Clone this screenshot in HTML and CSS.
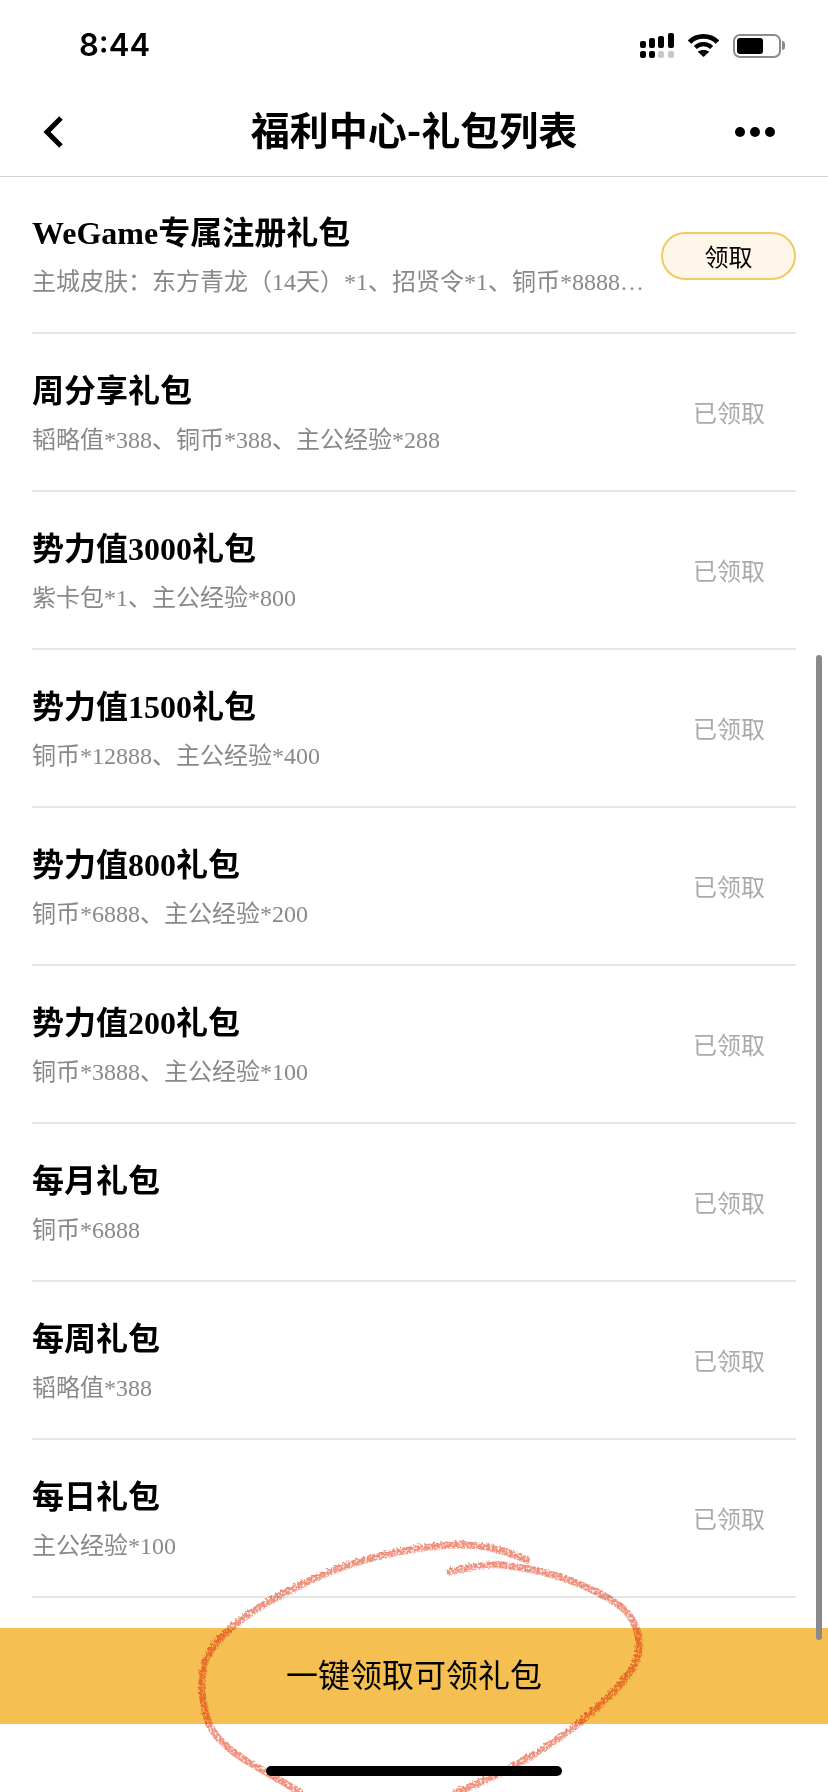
FILE: index.html
```html
<!DOCTYPE html>
<html lang="zh-CN">
<head>
    <meta charset="UTF-8">
    <meta name="viewport" content="width=device-width, initial-scale=1.0">
    <title>福利中心-礼包列表</title>
    <link rel="stylesheet" href="styles.css">
</head>
<body>
    <div class="phone">
        <div class="status-bar">
            <span class="time">8:44</span>
            <div class="status-icons">
                <svg class="signal" width="34" height="25" viewBox="0 0 34 25">
                    <rect x="0" y="8" width="6" height="7" rx="2" fill="#000"/>
                    <rect x="9" y="5" width="6" height="10" rx="2" fill="#000"/>
                    <rect x="18" y="3" width="6" height="12" rx="2" fill="#000"/>
                    <rect x="28" y="0" width="6" height="15" rx="2" fill="#000"/>
                    <rect x="0" y="18" width="6" height="7" rx="2" fill="#000"/>
                    <rect x="9" y="18" width="6" height="7" rx="2" fill="#000"/>
                    <rect x="18" y="18" width="6" height="7" rx="2" fill="#c8c8c8"/>
                    <rect x="28" y="18" width="6" height="7" rx="2" fill="#c8c8c8"/>
                </svg>
                <svg class="wifi" width="31" height="23" viewBox="0 0 32 24">
                    <path d="M1.5 8.5 C9 0.5 23 0.5 30.5 8.5" fill="none" stroke="#000" stroke-width="5"/>
                    <path d="M7.5 14 C12 9.5 20 9.5 24.5 14" fill="none" stroke="#000" stroke-width="4.5"/>
                    <path d="M16 24 L10 18.5 C13 16 19 16 22 18.5 Z" fill="#000"/>
                </svg>
                <div class="battery">
                    <div class="battery-body"><div class="battery-level"></div></div>
                    <div class="battery-cap"></div>
                </div>
            </div>
        </div>

        <div class="nav-bar">
            <svg class="back" width="24" height="36" viewBox="0 0 24 36">
                <path d="M21 4 L7 18 L21 32" fill="none" stroke="#000" stroke-width="5"/>
            </svg>
            <h1 class="nav-title">福利中心-礼包列表</h1>
            <div class="more"><span></span><span></span><span></span></div>
        </div>

        <div class="gift-list">
            <div class="gift-row">
                <div class="gift-info">
                    <div class="gift-name">WeGame专属注册礼包</div>
                    <div class="gift-desc">主城皮肤：东方青龙（14天）*1、招贤令*1、铜币*8888…</div>
                </div>
                <button class="claim-btn">领取</button>
            </div>
            <div class="gift-row">
                <div class="gift-info">
                    <div class="gift-name">周分享礼包</div>
                    <div class="gift-desc">韬略值*388、铜币*388、主公经验*288</div>
                </div>
                <span class="claimed">已领取</span>
            </div>
            <div class="gift-row">
                <div class="gift-info">
                    <div class="gift-name">势力值3000礼包</div>
                    <div class="gift-desc">紫卡包*1、主公经验*800</div>
                </div>
                <span class="claimed">已领取</span>
            </div>
            <div class="gift-row">
                <div class="gift-info">
                    <div class="gift-name">势力值1500礼包</div>
                    <div class="gift-desc">铜币*12888、主公经验*400</div>
                </div>
                <span class="claimed">已领取</span>
            </div>
            <div class="gift-row">
                <div class="gift-info">
                    <div class="gift-name">势力值800礼包</div>
                    <div class="gift-desc">铜币*6888、主公经验*200</div>
                </div>
                <span class="claimed">已领取</span>
            </div>
            <div class="gift-row">
                <div class="gift-info">
                    <div class="gift-name">势力值200礼包</div>
                    <div class="gift-desc">铜币*3888、主公经验*100</div>
                </div>
                <span class="claimed">已领取</span>
            </div>
            <div class="gift-row">
                <div class="gift-info">
                    <div class="gift-name">每月礼包</div>
                    <div class="gift-desc">铜币*6888</div>
                </div>
                <span class="claimed">已领取</span>
            </div>
            <div class="gift-row">
                <div class="gift-info">
                    <div class="gift-name">每周礼包</div>
                    <div class="gift-desc">韬略值*388</div>
                </div>
                <span class="claimed">已领取</span>
            </div>
            <div class="gift-row">
                <div class="gift-info">
                    <div class="gift-name">每日礼包</div>
                    <div class="gift-desc">主公经验*100</div>
                </div>
                <span class="claimed">已领取</span>
            </div>
        </div>

        <button class="claim-all">一键领取可领礼包</button>
        <div class="home-area"><div class="home-indicator"></div></div>

        <!-- scrollbar thumb and the hand drawn circle lie over the page -->
        <div class="scroll-thumb"></div>
        <svg class="scribble" width="828" height="1792" viewBox="0 0 828 1792">
            <defs>
                <filter id="crayon" filterUnits="userSpaceOnUse" x="150" y="1500" width="550" height="292">
                    <feTurbulence type="fractalNoise" baseFrequency="0.4" numOctaves="3" seed="7" result="noise"/>
                    <feDisplacementMap in="SourceGraphic" in2="noise" scale="5" result="rough"/>
                    <feColorMatrix in="noise" type="matrix" values="0 0 0 0 0  0 0 0 0 0  0 0 0 0 0  0 0 0 3 -0.6" result="grain"/>
                    <feComposite in="rough" in2="grain" operator="in" result="grainy"/>
                    <feGaussianBlur in="grainy" stdDeviation="0.5"/>
                </filter>
            </defs>
            <g class="scribble-lines" filter="url(#crayon)">
                <path d="M527 1560 Q507 1552 493.5 1548.5 Q480 1545 460 1545 Q440 1545 415 1549 Q390 1553 363.5 1560.5 Q337 1568 313.5 1579 Q290 1590 273.5 1599 Q257 1608 243.5 1618 Q230 1628 220 1639 Q210 1650 206 1660 Q202 1670 202 1685 Q202 1700 206 1715 Q210 1730 221.5 1741.5 Q233 1753 250 1763 Q267 1773 300 1792"/>
                <path d="M450 1572 Q487 1563 503.5 1565 Q520 1567 541.5 1572 Q563 1577 581.5 1585 Q600 1593 613.5 1601.5 Q627 1610 632.5 1620 Q638 1630 639 1640 Q640 1650 636.5 1660 Q633 1670 623 1681.5 Q613 1693 600 1705 Q587 1717 570 1730 Q553 1743 536.5 1753 Q520 1763 503.5 1771.5 Q487 1780 457 1792"/>
            </g>
        </svg>
    </div>
</body>
</html>
```

FILE: styles.css
```css
* {
    box-sizing: border-box;
}
body {
    margin: 0;
    background-color: #fff;
    color: #000;
    font-family: "Liberation Serif", "Noto Sans CJK SC", serif;
}
.phone {
    position: relative;
    width: 828px;
    height: 1792px;
    overflow: hidden;
    display: flex;
    flex-direction: column;
    background-color: #fff;
}

/* Status bar */
.status-bar {
    height: 88px;
    padding: 29px 43px 0 79px;
    display: flex;
    justify-content: space-between;
    align-items: flex-start;
}
.time {
    font-family: Inter, "Liberation Sans", sans-serif;
    font-size: 31px;
    font-weight: 600;
    line-height: 32px;
}
.status-icons {
    display: flex;
    align-items: center;
    gap: 14px;
    padding-top: 4px;
}
.battery {
    display: flex;
    align-items: center;
    gap: 1px;
}
.battery-body {
    width: 48px;
    height: 24px;
    padding: 2px;
    border: 2px solid #8c8c8c;
    border-radius: 7px;
}
.battery-level {
    width: 26px;
    height: 100%;
    background-color: #000;
    border-radius: 3px;
}
.battery-cap {
    width: 3px;
    height: 9px;
    background-color: #8c8c8c;
    border-radius: 0 3px 3px 0;
}

/* Nav bar */
.nav-bar {
    height: 89px;
    padding: 0 53px 1px 40px;
    display: flex;
    align-items: center;
    justify-content: space-between;
    position: relative;
    border-bottom: 1px solid #d4d4d4;
}
.nav-title {
    position: absolute;
    left: 0;
    right: 0;
    top: 15px;
    margin: 0;
    text-align: center;
    font-family: "Noto Sans CJK SC", sans-serif;
    font-size: 39px;
    font-weight: 700;
    line-height: 50px;
}
.more {
    display: flex;
    gap: 5px;
}
.more span {
    width: 10px;
    height: 10px;
    background-color: #000;
    border-radius: 50%;
}

/* Gift list */
.gift-list {
    flex: 1;
    min-height: 0;
    padding: 0 32px;
}
.gift-row {
    height: 158px;
    display: flex;
    align-items: center;
    justify-content: space-between;
    border-bottom: 2px solid #e6e6e6;
}
.gift-row:first-child {
    height: 157px;
}
.gift-info {
    width: 614px;
}
.gift-name {
    font-size: 32px;
    font-weight: bold;
    line-height: 44px;
}
.gift-desc {
    margin-top: 11px;
    font-size: 24px;
    line-height: 32px;
    color: #888;
    white-space: nowrap;
}
.claim-btn {
    width: 135px;
    height: 48px;
    margin-top: 2px;
    padding: 0;
    font-family: "Noto Sans CJK SC", sans-serif;
    font-size: 24px;
    color: #000;
    background-color: #fdf6e9;
    border: 2px solid #f0c962;
    border-radius: 24px;
}
.claimed {
    width: 103px;
    padding: 0 34px 2px 0;
    white-space: nowrap;
    font-family: "Noto Sans CJK SC", sans-serif;
    font-size: 24px;
    color: #aaa;
}

/* Bottom */
.claim-all {
    height: 96px;
    flex-shrink: 0;
    border: 0;
    padding: 0 0 6px;
    font-family: "Noto Sans CJK SC", sans-serif;
    font-size: 32px;
    color: #000;
    background-color: #f5bf52;
}
.home-area {
    height: 68px;
    flex-shrink: 0;
    padding-top: 42px;
    display: flex;
    justify-content: center;
}
.home-indicator {
    width: 296px;
    height: 10px;
    background-color: #000;
    border-radius: 5px;
}
.scroll-thumb {
    position: absolute;
    top: 655px;
    right: 6px;
    width: 6px;
    height: 985px;
    background-color: #8a8a8a;
    border-radius: 3px;
}
.scribble {
    position: absolute;
    top: 0;
    left: 0;
    pointer-events: none;
    mix-blend-mode: multiply;
}
.scribble-lines {
    fill: none;
    stroke: #f0907c;
    stroke-width: 7;
    stroke-linecap: round;
}
```
